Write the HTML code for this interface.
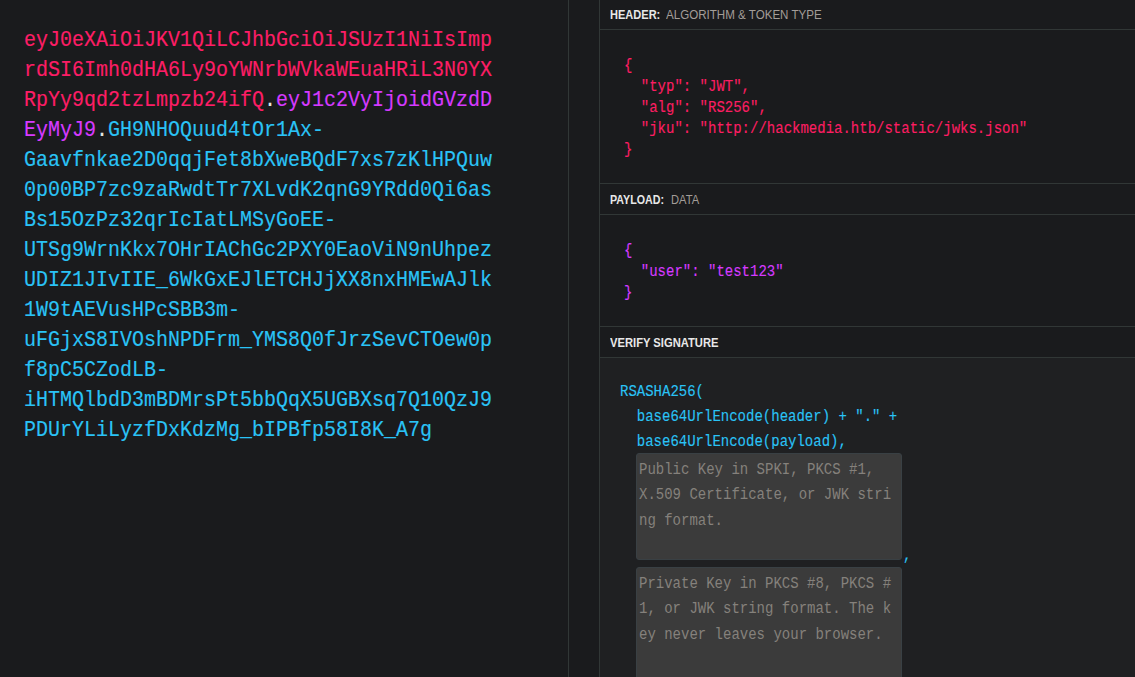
<!DOCTYPE html>
<html>
<head>
<meta charset="utf-8">
<style>
html,body{margin:0;padding:0;width:1135px;height:677px;overflow:hidden;background:#1a1b1d;}
body{position:relative;font-family:"Liberation Sans",sans-serif;}
.vl{position:absolute;top:0;width:1px;height:677px;background:#313736;}
.hl{position:absolute;left:600px;width:535px;height:1px;background:#313736;}
#tok{position:absolute;left:24px;top:26px;font-family:"Liberation Mono",monospace;font-size:22px;transform-origin:0 0;transform:scaleX(0.90909);-webkit-text-stroke:0.15px currentColor;line-height:30px;white-space:pre;}
.r{color:#fd1d66;}
.p{color:#d63aff;}
.c{color:#2ac3f6;}
.w{color:#e6e6e6;}
.lb{position:absolute;left:610px;font-size:12px;line-height:14px;white-space:pre;font-weight:bold;color:#e8e8e8;transform-origin:0 0;}
.gr{position:absolute;font-size:12px;line-height:14px;white-space:pre;color:#a39d98;transform-origin:0 0;transform:scaleX(0.957);}
.code{position:absolute;font-family:"Liberation Mono",monospace;font-size:16px;transform-origin:0 0;transform:scaleX(0.875);white-space:pre;-webkit-text-stroke:0.12px currentColor;}
#hj{left:624px;top:56px;line-height:21px;color:#fd1d63;}
#pj{left:624px;top:241px;line-height:21px;color:#d63aff;}
#sig{left:620px;top:380px;line-height:25px;color:#2ac3f6;}
.ta{position:absolute;left:636px;width:266px;background:#3b3b3b;border:1px solid #394044;box-sizing:border-box;border-radius:3px;}
.tt{position:absolute;left:638.8px;font-family:"Liberation Mono",monospace;font-size:16px;transform-origin:0 0;transform:scaleX(0.875);line-height:25.5px;color:#85817c;white-space:pre;}
</style>
</head>
<body>
<div style="position:absolute;left:600px;top:358px;width:535px;height:319px;background:#1f2022"></div>
<div class="vl" style="left:568px"></div>
<div class="vl" style="left:599px"></div>
<div class="hl" style="top:29px"></div>
<div class="hl" style="top:183px"></div>
<div class="hl" style="top:214px"></div>
<div class="hl" style="top:326px"></div>
<div class="hl" style="top:357px"></div>

<div id="tok"><span class="r">eyJ0eXAiOiJKV1QiLCJhbGciOiJSUzI1NiIsImp
rdSI6Imh0dHA6Ly9oYWNrbWVkaWEuaHRiL3N0YX
RpYy9qd2tzLmpzb24ifQ</span><span class="w">.</span><span class="p">eyJ1c2VyIjoidGVzdD
EyMyJ9</span><span class="w">.</span><span class="c">GH9NHOQuud4tOr1Ax-
Gaavfnkae2D0qqjFet8bXweBQdF7xs7zKlHPQuw
0p00BP7zc9zaRwdtTr7XLvdK2qnG9YRdd0Qi6as
Bs15OzPz32qrIcIatLMSyGoEE-
UTSg9WrnKkx7OHrIAChGc2PXY0EaoViN9nUhpez
UDIZ1JIvIIE_6WkGxEJlETCHJjXX8nxHMEwAJlk
1W9tAEVusHPcSBB3m-
uFGjxS8IVOshNPDFrm_YMS8Q0fJrzSevCTOew0p
f8pC5CZodLB-
iHTMQlbdD3mBDMrsPt5bbQqX5UGBXsq7Q10QzJ9
PDUrYLiLyzfDxKdzMg_bIPBfp58I8K_A7g</span></div>

<div class="lb" style="top:8px;transform:scaleX(0.92)">HEADER:</div><div class="gr" style="top:8px;left:665.5px;transform:scaleX(0.965)">ALGORITHM &amp; TOKEN TYPE</div>
<div class="lb" style="top:193px;transform:scaleX(0.89)">PAYLOAD:</div><div class="gr" style="top:193px;left:670.5px;transform:scaleX(0.93)">DATA</div>
<div class="lb" style="top:336px;transform:scaleX(0.933)">VERIFY SIGNATURE</div>

<div id="hj" class="code">{
  "typ": "JWT",
  "alg": "RS256",
  "jku": "http://hackmedia.htb/static/jwks.json"
}</div>
<div id="pj" class="code">{
  "user": "test123"
}</div>
<div id="sig" class="code">RSASHA256(
  base64UrlEncode(header) + "." +
  base64UrlEncode(payload),</div>
<div class="ta" style="top:453px;height:107px"></div>
<div class="tt" style="top:457.5px">Public Key in SPKI, PKCS #1,
X.509 Certificate, or JWK stri
ng format.</div>
<div class="code" style="left:903px;top:548px;line-height:16px;color:#2ac3f6">,</div>
<div class="ta" style="top:567px;height:120px"></div>
<div class="tt" style="top:571.5px">Private Key in PKCS #8, PKCS #
1, or JWK string format. The k
ey never leaves your browser.</div>
</body>
</html>
